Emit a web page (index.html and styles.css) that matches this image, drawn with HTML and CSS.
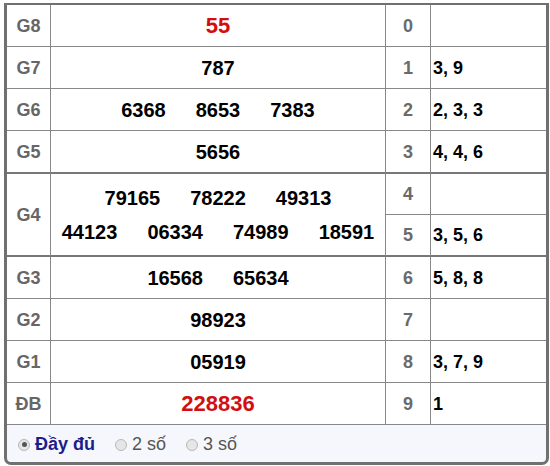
FILE: index.html
```html
<!DOCTYPE html>
<html>
<head>
<meta charset="utf-8">
<link rel="stylesheet" href="styles.css">
</head>
<body>
<div class="box">
  <div class="grid">
    <div class="c lbl">G8</div><div class="c num red">55</div><div class="c dg">0</div><div class="c tl"></div>
    <div class="c lbl">G7</div><div class="c num">787</div><div class="c dg">1</div><div class="c tl">3, 9</div>
    <div class="c lbl">G6</div><div class="c num"><span>6368</span><span>8653</span><span>7383</span></div><div class="c dg">2</div><div class="c tl">2, 3, 3</div>
    <div class="c lbl">G5</div><div class="c num">5656</div><div class="c dg">3</div><div class="c tl">4, 4, 6</div>
    <div class="c lbl span2 thick">G4</div>
    <div class="c num span2 thick g4">
      <div class="ln"><span>79165</span><span>78222</span><span>49313</span></div>
      <div class="ln"><span>44123</span><span>06334</span><span>74989</span><span>18591</span></div>
    </div>
    <div class="c dg thickt">4</div><div class="c tl thickt"></div>
    <div class="c dg thickb">5</div><div class="c tl thickb">3, 5, 6</div>
    <div class="c lbl">G3</div><div class="c num"><span>16568</span><span>65634</span></div><div class="c dg">6</div><div class="c tl">5, 8, 8</div>
    <div class="c lbl">G2</div><div class="c num">98923</div><div class="c dg">7</div><div class="c tl"></div>
    <div class="c lbl">G1</div><div class="c num">05919</div><div class="c dg">8</div><div class="c tl">3, 7, 9</div>
    <div class="c lbl">ĐB</div><div class="c num red">228836</div><div class="c dg">9</div><div class="c tl">1</div>
  </div>
  <div class="opts">
    <label class="opt on"><span class="radio"></span>Đầy đủ</label>
    <label class="opt"><span class="radio"></span>2 số</label>
    <label class="opt"><span class="radio"></span>3 số</label>
  </div>
</div>
</body>
</html>
```
FILE: styles.css
```css
html, body { margin: 0; padding: 0; background: #fff; }
body { font-family: "Liberation Sans", Arial, sans-serif; }
.box {
  margin: 3px 1px 0 4px;
  width: 539px;
  border: 3px solid #707070;
  border-top-width: 2px;
  border-radius: 0 0 7px 7px;
  background: #f6f7fc;
}
.grid {
  display: grid;
  grid-template-columns: 44px 335px 45px 115px;
  grid-auto-rows: 42px;
  background: #fff;
}
.c {
  border-right: 1px solid #888;
  border-bottom: 1px solid #888;
  display: flex;
  align-items: center;
  box-sizing: border-box;
  font-weight: bold;
  padding-top: 1px;
}
.c.tl { border-right: none; padding-left: 2px; font-size: 18px; color: #000; }
.lbl { justify-content: center; color: #666; font-size: 18px; }
.num { justify-content: center; font-size: 20px; color: #000; gap: 30px; }
.num.red { color: #d20e0e; font-size: 22px; }
.dg { justify-content: center; color: #6a6a6a; font-size: 18px; }
.span2 { grid-row: span 2; }
.g4 { flex-direction: column; justify-content: center; gap: 11px; }
.g4 .ln { display: flex; gap: 30px; }
.thick { border-bottom: 2px solid #777; border-top: 2px solid #777; margin-top: -1px; }
.thickt { border-top: 2px solid #777; margin-top: -1px; }
.thickb { border-bottom: 2px solid #777; }
.opts {
  height: 37px;
  display: flex;
  align-items: center;
  padding: 2px 0 0 11px;
  box-sizing: border-box;
  gap: 20px;
  font-size: 18px;
  color: #555;
}
.opt { display: flex; align-items: center; gap: 5px; }
.opt.on { font-weight: bold; color: #1c1c8a; }
.radio {
  width: 12px; height: 12px;
  border-radius: 50%;
  border: 1px solid #b8b8b8;
  background: #e6e6e6;
  box-sizing: border-box;
  position: relative;
}
.opt.on .radio::after {
  content: "";
  position: absolute;
  left: 2.5px; top: 2.5px;
  width: 5px; height: 5px;
  border-radius: 50%;
  background: #555;
}
```
